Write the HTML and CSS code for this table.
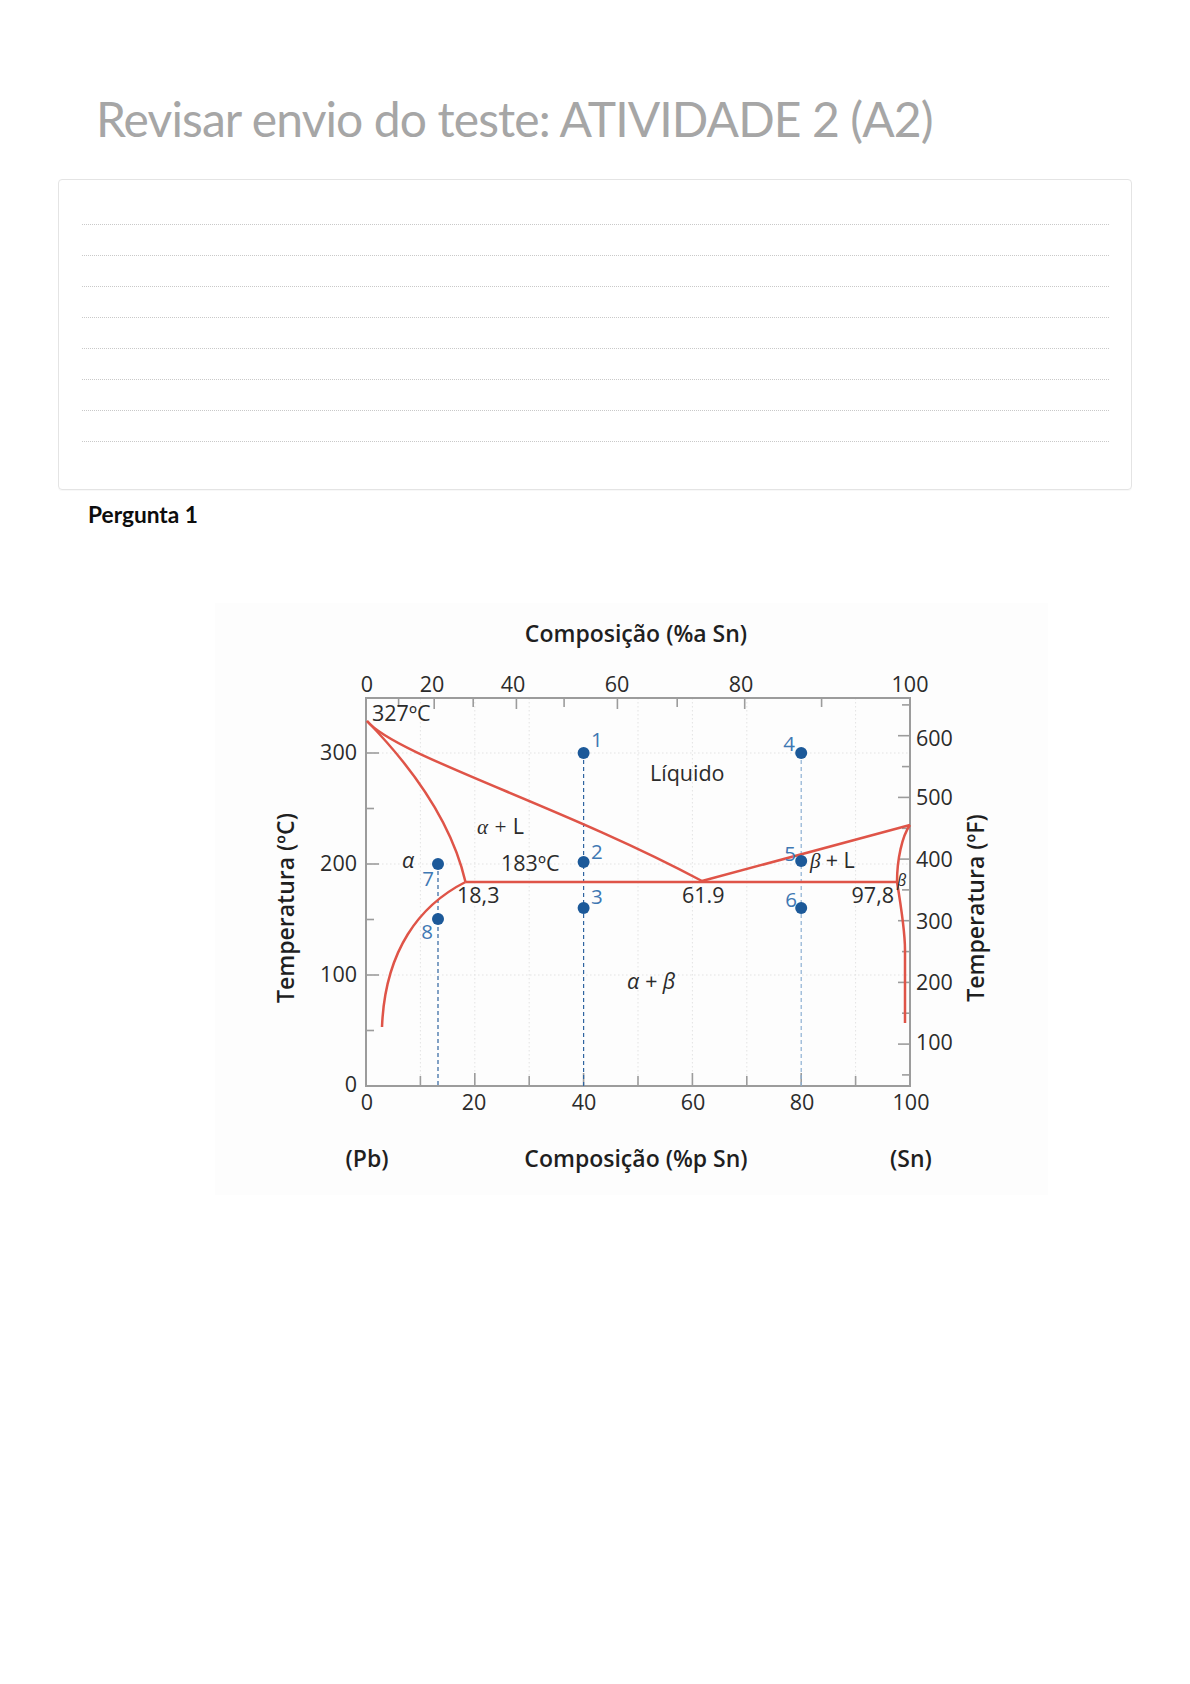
FILE: index.html
```
<!DOCTYPE html>
<html lang="pt-BR">
<head>
<meta charset="utf-8">
<title>Revisar envio do teste: ATIVIDADE 2 (A2)</title>
<link rel="stylesheet" href="styles.css">
</head>
<body>
<main class="page">
  <h1 class="title">Revisar envio do teste: ATIVIDADE 2 (A2)</h1>
  <section class="card">
    <div class="rule"></div>
    <div class="rule"></div>
    <div class="rule"></div>
    <div class="rule"></div>
    <div class="rule"></div>
    <div class="rule"></div>
    <div class="rule"></div>
    <div class="rule"></div>
  </section>
  <h3 class="question">Pergunta 1</h3>
  <figure class="figure">
    <svg class="diagram" width="833" height="592" viewBox="215 603 833 592" xmlns="http://www.w3.org/2000/svg">
      <rect class="bg" x="215" y="603" width="833" height="592"/>
      <!-- grid -->
      <g class="grid">
        <line x1="420.4" y1="698" x2="420.4" y2="1086"/>
        <line x1="474.8" y1="698" x2="474.8" y2="1086"/>
        <line x1="529.2" y1="698" x2="529.2" y2="1086"/>
        <line x1="638" y1="698" x2="638" y2="1086"/>
        <line x1="692.4" y1="698" x2="692.4" y2="1086"/>
        <line x1="746.8" y1="698" x2="746.8" y2="1086"/>
        <line x1="855.6" y1="698" x2="855.6" y2="1086"/>
        <line x1="366" y1="975" x2="910" y2="975"/>
        <line x1="366" y1="864" x2="910" y2="864"/>
        <line x1="366" y1="753" x2="910" y2="753"/>
      </g>
      <!-- ticks -->
      <g class="ticks">
        <line x1="420.4" y1="1086" x2="420.4" y2="1076"/>
        <line x1="474.8" y1="1086" x2="474.8" y2="1073"/>
        <line x1="529.2" y1="1086" x2="529.2" y2="1076"/>
        <line x1="583.6" y1="1086" x2="583.6" y2="1073"/>
        <line x1="638" y1="1086" x2="638" y2="1076"/>
        <line x1="692.4" y1="1086" x2="692.4" y2="1073"/>
        <line x1="746.8" y1="1086" x2="746.8" y2="1076"/>
        <line x1="801.2" y1="1086" x2="801.2" y2="1073"/>
        <line x1="855.6" y1="1086" x2="855.6" y2="1076"/>

        <line x1="366" y1="1030.5" x2="374" y2="1030.5"/>
        <line x1="366" y1="975" x2="379" y2="975"/>
        <line x1="366" y1="919.5" x2="374" y2="919.5"/>
        <line x1="366" y1="864" x2="379" y2="864"/>
        <line x1="366" y1="808.5" x2="374" y2="808.5"/>
        <line x1="366" y1="753" x2="379" y2="753"/>

        <line x1="398.6" y1="698" x2="398.6" y2="707"/>
        <line x1="434.2" y1="698" x2="434.2" y2="709"/>
        <line x1="473.2" y1="698" x2="473.2" y2="707"/>
        <line x1="516.4" y1="698" x2="516.4" y2="709"/>
        <line x1="564.1" y1="698" x2="564.1" y2="707"/>
        <line x1="617.4" y1="698" x2="617.4" y2="709"/>
        <line x1="677.2" y1="698" x2="677.2" y2="707"/>
        <line x1="744.7" y1="698" x2="744.7" y2="709"/>
        <line x1="821.6" y1="698" x2="821.6" y2="707"/>

        <line x1="910" y1="1074.9" x2="902" y2="1074.9"/>
        <line x1="910" y1="1044.1" x2="898" y2="1044.1"/>
        <line x1="910" y1="1013.2" x2="902" y2="1013.2"/>
        <line x1="910" y1="982.4" x2="898" y2="982.4"/>
        <line x1="910" y1="951.6" x2="902" y2="951.6"/>
        <line x1="910" y1="920.7" x2="898" y2="920.7"/>
        <line x1="910" y1="889.9" x2="902" y2="889.9"/>
        <line x1="910" y1="859.1" x2="898" y2="859.1"/>
        <line x1="910" y1="828.3" x2="902" y2="828.3"/>
        <line x1="910" y1="797.4" x2="898" y2="797.4"/>
        <line x1="910" y1="766.6" x2="902" y2="766.6"/>
        <line x1="910" y1="735.7" x2="898" y2="735.7"/>
        <line x1="910" y1="704.9" x2="902" y2="704.9"/>
      </g>
      <rect class="frame" x="366" y="698" width="544" height="388"/>

      <!-- dashed composition lines -->
      <line class="dash" x1="583.6" y1="753" x2="583.6" y2="1086"/>
      <line class="dash light" x1="801.2" y1="753" x2="801.2" y2="1086"/>
      <line class="dash" x1="438" y1="864" x2="438" y2="1086"/>

      <!-- phase boundaries -->
      <g class="phase">
        <path d="M367,721 C395,755 560,805 702,881"/>
        <path d="M367,721 C405,760 450,815 465.5,882"/>
        <path d="M465.5,882 C420,905 385,950 382,1027"/>
        <path d="M465.5,882 L897,882"/>
        <path d="M702,881 L910,825"/>
        <path d="M910,825 C902,836 897,860 897,882"/>
        <path d="M897,882 C900,900 905,930 905,950 L905,1023"/>
      </g>

      <!-- points -->
      <g class="pts">
        <circle cx="583.6" cy="753" r="6"/>
        <circle cx="583.6" cy="862" r="6"/>
        <circle cx="583.6" cy="908" r="6"/>
        <circle cx="801.2" cy="753" r="6"/>
        <circle cx="801.2" cy="861" r="6"/>
        <circle cx="801.2" cy="908" r="6"/>
        <circle cx="438" cy="864" r="6"/>
        <circle cx="438" cy="919" r="6"/>
      </g>
      <g class="num">
        <text x="591" y="747">1</text>
        <text x="591" y="859">2</text>
        <text x="591" y="904">3</text>
        <text x="795" y="751" text-anchor="end">4</text>
        <text x="796" y="861" text-anchor="end">5</text>
        <text x="797" y="907" text-anchor="end">6</text>
        <text x="434" y="886" text-anchor="end">7</text>
        <text x="433" y="939" text-anchor="end">8</text>
      </g>

      <!-- region labels -->
      <g class="lbl">
        <text x="372" y="721">327ºC</text>
        <text x="650" y="781">Líquido</text>
        <text x="501" y="871">183ºC</text>
        <text x="457" y="903">18,3</text>
        <text x="682" y="903">61.9</text>
        <text x="894" y="903" text-anchor="end">97,8</text>
        <text x="477" y="834"><tspan class="gr">α + </tspan>L</text>
        <text x="402" y="868" class="gr">α</text>
        <text x="810" y="868"><tspan class="gr">β </tspan>+ L</text>
        <text x="627" y="989" class="gr">α + β</text>
        <text x="897" y="886" class="gr small">β</text>
      </g>

      <!-- axis numbers -->
      <g class="lbl" text-anchor="middle">
        <text x="367" y="692">0</text>
        <text x="432" y="692">20</text>
        <text x="513" y="692">40</text>
        <text x="617" y="692">60</text>
        <text x="741" y="692">80</text>
        <text x="910" y="692">100</text>

        <text x="367" y="1110">0</text>
        <text x="474" y="1110">20</text>
        <text x="584" y="1110">40</text>
        <text x="693" y="1110">60</text>
        <text x="802" y="1110">80</text>
        <text x="911" y="1110">100</text>
      </g>
      <g class="lbl" text-anchor="end">
        <text x="357" y="760">300</text>
        <text x="357" y="871">200</text>
        <text x="357" y="982">100</text>
        <text x="357" y="1092">0</text>
      </g>
      <g class="lbl">
        <text x="916" y="746">600</text>
        <text x="916" y="805">500</text>
        <text x="916" y="867">400</text>
        <text x="916" y="929">300</text>
        <text x="916" y="990">200</text>
        <text x="916" y="1050">100</text>
      </g>

      <!-- axis titles -->
      <g class="axt">
        <text x="636" y="642" text-anchor="middle">Composição (%a Sn)</text>
        <text x="636" y="1167" text-anchor="middle">Composição (%p Sn)</text>
        <text x="367" y="1167" text-anchor="middle">(Pb)</text>
        <text x="911" y="1167" text-anchor="middle">(Sn)</text>
        <text transform="translate(294,908) rotate(-90)" text-anchor="middle">Temperatura (ºC)</text>
        <text transform="translate(984,908) rotate(-90)" text-anchor="middle">Temperatura (ºF)</text>
      </g>
    </svg>
  </figure>
</main>
</body>
</html>
```
FILE: styles.css
```
html, body {
  margin: 0;
  padding: 0;
  background: #ffffff;
}

body {
  font-family: Lato, "Open Sans", "Liberation Sans", sans-serif;
  color: #000;
}

.page {
  width: 1190px;
}

.title {
  margin: 0;
  padding: 90px 0 0 96px;
  font-family: Lato, "Liberation Sans", sans-serif;
  font-weight: 400;
  font-size: 48px;
  line-height: 58px;
  letter-spacing: -0.9px;
  color: #a6a6a6;
}

.card {
  box-sizing: border-box;
  width: 1074px;
  height: 311px;
  margin: 31px 0 0 58px;
  padding: 14px 22px 0 23px;
  border: 1px solid #e4e4e4;
  border-radius: 4px;
  box-shadow: 0 1px 1px rgba(0, 0, 0, 0.03);
}

.rule {
  height: 30px;
  border-bottom: 1px dotted #c9c9c9;
}

.question {
  margin: 12px 0 0 88px;
  font-family: Lato, "Liberation Sans", sans-serif;
  font-weight: 700;
  font-size: 22.7px;
  line-height: 26px;
  color: #0d0d0d;
}

.figure {
  margin: 75px 0 0 215px;
  padding: 0;
}

.diagram {
  display: block;
}

.diagram .bg {
  fill: #fdfdfd;
}

.diagram .grid line {
  stroke: #e3e3e3;
  stroke-width: 1;
  stroke-dasharray: 1.5 2.5;
}

.diagram .ticks line {
  stroke: #9c9c9c;
  stroke-width: 1.6;
}

.diagram .frame {
  fill: none;
  stroke: #9c9c9c;
  stroke-width: 2;
}

.diagram .dash {
  stroke: #2f64a0;
  stroke-width: 1.2;
  stroke-dasharray: 4 3;
}

.diagram .dash.light {
  stroke: #8db0d2;
}

.diagram .phase path {
  fill: none;
  stroke: #df5448;
  stroke-width: 2.5;
  stroke-linejoin: round;
}

.diagram .pts circle {
  fill: #1c5999;
}

.diagram .num text {
  font-family: "Open Sans", "DejaVu Sans", sans-serif;
  font-size: 20.5px;
  fill: #3f78b3;
}

.diagram .lbl text {
  font-family: "Open Sans", "DejaVu Sans", sans-serif;
  font-size: 21.5px;
  fill: #2b2b2b;
}

.diagram .gr {
  font-family: "Liberation Serif", "DejaVu Serif", serif;
  font-style: italic;
  font-size: 21px;
}

.diagram .lbl text.small {
  font-size: 16px;
}

.diagram .axt text {
  font-family: "Open Sans", "DejaVu Sans", sans-serif;
  font-weight: 600;
  font-size: 23px;
  fill: #1f1f1f;
}
```
